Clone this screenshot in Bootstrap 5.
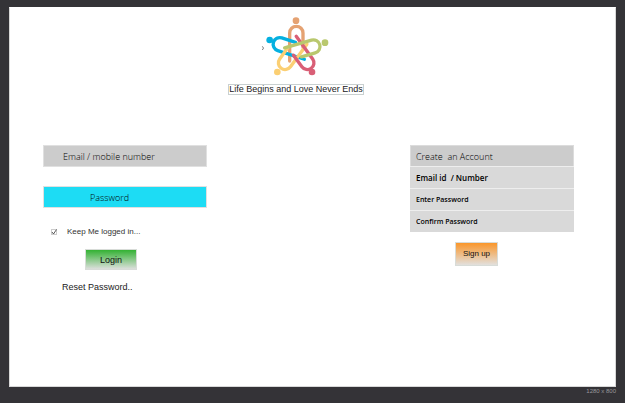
<!DOCTYPE html>
<html lang="en">
<head>
<meta charset="utf-8">
<meta name="viewport" content="width=device-width, initial-scale=1">
<title>Life Begins and Love Never Ends</title>
<link href="https://cdn.jsdelivr.net/npm/bootstrap@5.3.0/dist/css/bootstrap.min.css" rel="stylesheet">
<style>
body{background:#343337;font-family:"Liberation Sans",sans-serif;font-size:9px;line-height:12px;color:#222;padding:7px 9px 0}
.sheet{background:#fff;height:calc(100vh - 23px);min-height:320px;border:1px solid #d8d8d8;border-top-color:#fff}
.brand{padding-top:2px;padding-right:35px}
.tagline{font-size:9px;line-height:9px;border:1px solid #c9d0d0;margin:4px 0 0 2px;padding:0}
.forms{padding:50px 41px 0 33px}
.pane{width:164px}
.field{font-family:"Open Sans",sans-serif;font-size:9px;line-height:12px;height:22px;padding:0 6px;border:1px solid #e0e0e0;border-radius:0;background:#d9d9d9;color:#000}
.field:focus{background:#d9d9d9;box-shadow:none}
.field::placeholder{color:#000;opacity:1}
.field.user{background:#ccc;padding-left:19px;font-weight:300}
.field.secret{background:#1ddcf4;padding-left:46px;font-weight:300;margin-top:19px}
.pane-title{font-family:"Open Sans",sans-serif;font-size:9px;line-height:12px;height:21px;padding:5px 5px 0;margin:0;background:#ccc;border:1px solid #dcdcdc;border-bottom:0;font-weight:300;color:#000;white-space:pre}
.stack .field{border-color:#eee;border-width:1px 0 0;font-weight:600}
.stack .field.user-id{font-size:8px}
.stack .field.code{font-size:7px}
.keep{margin:18px 0 0 8px;gap:10px;font-size:8px;color:#333}
.keep input{appearance:none;width:6px;height:6px;margin:0;border:1px solid #ccc;background:#fff}
.tick{display:grid;place-items:center}
.tick input,.tick svg{grid-area:1/1}
.tick svg{pointer-events:none}
.tick input:not(:checked)+svg{visibility:hidden}
.btn{border-radius:0;border:1px solid #d8dcd8;padding:0;color:#111}
.login{font-size:9px;line-height:18px;width:52px;height:21px;margin:11px 0 0 42px;background:linear-gradient(#33b233,#dcdfdc)}
.signup{font-size:8px;width:43px;height:24px;margin:10px 0 0 45px;background:linear-gradient(#fa962a,#e2e0dd)}
.reset{margin:11px 0 0 19px;color:#222}
.dims{font-size:6px;line-height:8px;color:#99989c}
</style>
<script src="https://cdn.jsdelivr.net/npm/bootstrap@5.3.0/dist/js/bootstrap.bundle.min.js"></script>
</head>
<body>
<main class="sheet">
  <header class="brand d-flex flex-column align-items-center">
    <svg width="80" height="70" viewBox="0 0 240 210" role="img" aria-label="Five people joined in a star">
      <defs><path id="person" d="M104 153V69a20 20 0 0 1 40 0V112" fill="none" stroke-width="10" stroke-linecap="round"/></defs>
      <path d="M22 109q7 5 0 11" fill="none" stroke="#777" stroke-width="3"/>
      <use href="#person" stroke="#e5a272"/>
      <use href="#person" stroke="#05b0e0" transform="translate(-3 0) rotate(-72 124 118)"/>
      <use href="#person" stroke="#fbcf73" transform="translate(-5 1) rotate(-144 124 118)"/>
      <use href="#person" stroke="#d95f76" transform="translate(4 1) rotate(144 124 118)"/>
      <use href="#person" stroke="#b9c86e" transform="translate(4 5) rotate(74 124 118)"/>
      <circle cx="123" cy="32" r="10" fill="#e5a272"/>
      <circle cx="44" cy="90" r="10" fill="#05b0e0"/>
      <circle cx="67" cy="186" r="10" fill="#fbcf73"/>
      <circle cx="171" cy="186" r="10" fill="#d95f76"/>
      <circle cx="210" cy="98" r="10" fill="#b9c86e"/>
    </svg>
    <p class="tagline">Life Begins and Love Never Ends</p>
  </header>
  <div class="forms d-flex justify-content-between align-items-start">
    <form class="pane">
      <input class="form-control field user" type="text" placeholder="Email / mobile number" aria-label="Email / mobile number">
      <input class="form-control field secret" type="password" placeholder="Password" aria-label="Password">
      <div class="keep d-flex align-items-center">
        <span class="tick"><input type="checkbox" id="keep" checked><svg width="6" height="6" viewBox="0 0 6 6"><path d="M1 3L2.500 5L5.500 .5" fill="none" stroke="#333" stroke-width=".8"/></svg></span>
        <label for="keep">Keep Me logged in...</label>
      </div>
      <button class="btn login d-block" type="button">Login</button>
      <a class="reset d-inline-block text-decoration-none" href="#">Reset Password..</a>
    </form>
    <form class="pane">
      <div class="stack">
        <h2 class="pane-title">Create  an Account</h2>
        <input class="form-control field user-id" type="text" placeholder="Email id  / Number" aria-label="Email id / Number">
        <input class="form-control field code" type="password" placeholder="Enter Password" aria-label="Enter Password">
        <input class="form-control field code" type="password" placeholder="Confirm Password" aria-label="Confirm Password">
      </div>
      <button class="btn signup d-block" type="button">Sign up</button>
    </form>
  </div>
</main>
<footer class="dims text-end">1280 x 800</footer>
</body>
</html>
